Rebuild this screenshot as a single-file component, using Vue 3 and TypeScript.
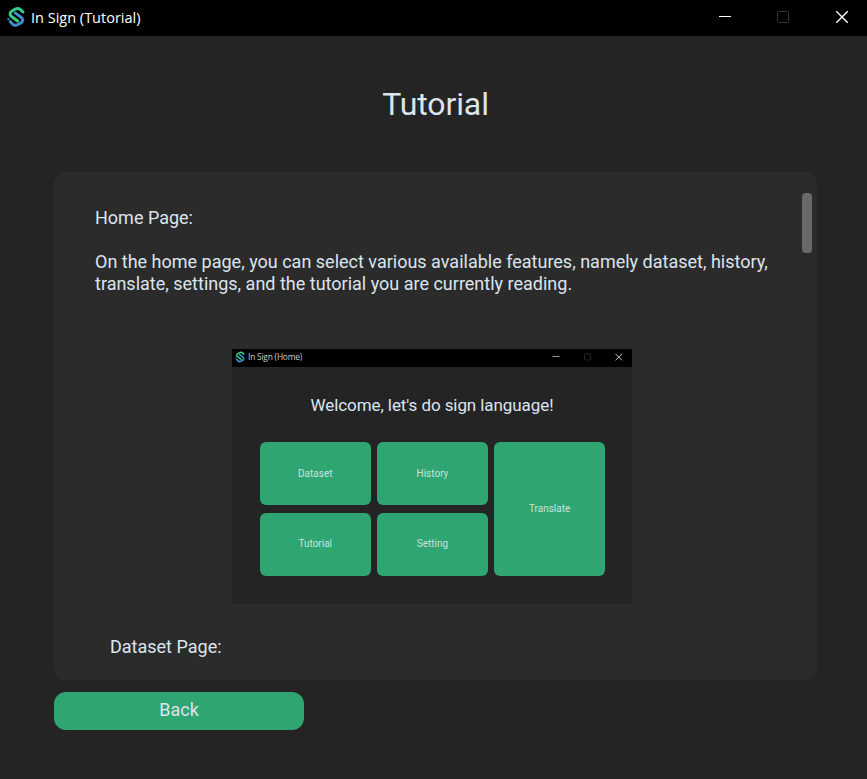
<script setup lang="ts">
import { defineComponent, h } from 'vue'

interface Tile {
  label: string
  tall?: boolean
}

const tiles: Tile[] = [
  { label: 'Dataset' },
  { label: 'History' },
  { label: 'Translate', tall: true },
  { label: 'Tutorial' },
  { label: 'Setting' },
]

const AppLogo = defineComponent({
  render: () =>
    h('svg', { viewBox: '7 7 18 20', fill: 'none', 'stroke-width': 2.9, 'stroke-linecap': 'round', 'stroke-linejoin': 'round' }, [
      h('path', { stroke: '#3e8ed0', d: 'M10.2 21.6L12.5 24.1C13.7 25.3 15.8 25.5 17.4 24.7L20.8 22.9C23 21.6 23.3 19.1 21.2 17.4L15.2 12.9' }),
      h('path', { stroke: '#33cf83', d: 'M22.9 11.9L20.4 9.6C19 8.4 17 8.4 15.4 9.1L12 11C9.6 12.3 9.4 14.8 11.5 16.5L17.6 21' }),
      h('circle', { cx: 8.3, cy: 19.1, r: 1.1, fill: '#3e8ed0', stroke: 'none' }),
    ]),
})
</script>

<template>
  <div class="window">
    <header class="titlebar">
      <AppLogo class="logo" />
      <span class="caption">In Sign (Tutorial)</span>
      <svg class="controls" viewBox="0 0 130 14" fill="none">
        <path d="M1 6.5h12" stroke="#fff" />
        <rect x="59.5" y="1.5" width="11" height="11" rx="1" stroke="#333" />
        <path d="M118.3 1.3l11.4 11.4M129.7 1.3l-11.4 11.4" stroke="#fff" stroke-width="1.3" />
      </svg>
    </header>

    <h1>Tutorial</h1>

    <main class="panel">
      <div class="content">
        <section class="copy">
          <p>Home Page:</p>
          <p>On the home page, you can select various available features, namely dataset, history,<br />translate, settings, and the tutorial you are currently reading.</p>
        </section>

        <figure class="preview">
          <div class="mini-bar">
            <AppLogo class="mini-logo" />
            <span class="mini-caption">In Sign (Home)</span>
            <svg class="mini-controls" viewBox="0 0 71 8" fill="none">
              <path d="M.5 3.5h7" stroke="#999" />
              <rect x="32.5" y="1" width="6" height="6" rx=".5" stroke="#252525" />
              <path d="M63.5.8l6.6 6.6M70.1.8l-6.6 6.6" stroke="#ddd" stroke-width=".9" />
            </svg>
          </div>
          <h2>Welcome, let's do sign language!</h2>
          <div class="tiles">
            <div v-for="tile in tiles" :key="tile.label" class="tile" :class="{ tall: tile.tall }">
              {{ tile.label }}
            </div>
          </div>
        </figure>

        <p class="next">Dataset Page:</p>
      </div>
      <div class="scroll-thumb"></div>
    </main>

    <button class="back" type="button">Back</button>
  </div>
</template>

<style>
body {
  background: #242424;
}
</style>

<style scoped>
.window {
  box-sizing: border-box;
  height: 779px;
  display: flex;
  flex-direction: column;
  overflow: hidden;
  background: #242424;
  color: #dce4ee;
  font-family: Roboto, "Liberation Sans", sans-serif;
}

.titlebar {
  flex: none;
  box-sizing: border-box;
  height: 36px;
  display: flex;
  align-items: center;
  padding: 0 19px 2px 7px;
  background: #000;
}

.logo {
  width: 18px;
  height: 20px;
}

.caption {
  margin-left: 6px;
  padding-top: 2px;
  color: #fff;
  font: 14.5px/20px "Open Sans", "Noto Sans", sans-serif;
}

.controls {
  width: 130px;
  height: 14px;
  margin-left: auto;
}

h1 {
  flex: none;
  margin: 48px 0 0 4px;
  height: 88px;
  font-size: 32px;
  line-height: 40px;
  font-weight: 400;
  letter-spacing: -0.1px;
  text-align: center;
}

.panel {
  flex: none;
  box-sizing: border-box;
  width: 763px;
  height: 508px;
  margin-left: 54px;
  padding: 21px 5px 21px 41px;
  display: flex;
  justify-content: space-between;
  border-radius: 12px;
  background: #2b2b2b;
}

.content {
  width: 690px;
}

p {
  margin: 0;
  font-size: 18px;
  line-height: 22px;
  white-space: nowrap;
}

.copy {
  display: grid;
  gap: 22px;
  padding-top: 14px;
  height: 142px;
  align-content: start;
}

.preview {
  width: 400px;
  height: 255px;
  margin: 0 0 0 137px;
  background: #242424;
}

.mini-bar {
  box-sizing: border-box;
  height: 18px;
  display: flex;
  align-items: center;
  padding: 0 9px 2px 3px;
  background: #000;
}

.mini-logo {
  width: 10px;
  height: 12px;
}

.mini-caption {
  margin-left: 3px;
  color: #ccc;
  font: 8.4px/12px "Open Sans", "Noto Sans", sans-serif;
  letter-spacing: -0.2px;
}

.mini-controls {
  width: 71px;
  height: 8px;
  margin-left: auto;
}

h2 {
  margin: 0;
  padding: 27px 0 26px;
  font-size: 17px;
  line-height: 22px;
  font-weight: 400;
  letter-spacing: -0.08px;
  text-align: center;
}

.tiles {
  display: grid;
  grid-template-columns: repeat(3, 110.5px);
  grid-template-rows: 63px 63.5px;
  gap: 7.5px 6.7px;
  padding-left: 28px;
}

.tile {
  display: flex;
  align-items: center;
  justify-content: center;
  padding-bottom: 1px;
  box-sizing: border-box;
  border-radius: 6px;
  background: #2fa572;
  color: #c9e2df;
  font-size: 10px;
}

.tall {
  grid-row: span 2;
}

.next {
  margin: 32px 0 0 15px;
}

.scroll-thumb {
  width: 10px;
  height: 60px;
  border-radius: 4px;
  background: #696969;
}

.back {
  flex: none;
  width: 250px;
  height: 38px;
  margin: 12px 0 0 54px;
  padding: 0 0 2px;
  border: 0;
  border-radius: 12px;
  background: #2fa572;
  color: #dce4ee;
  font: 18px/22px Roboto, sans-serif;
}
</style>
